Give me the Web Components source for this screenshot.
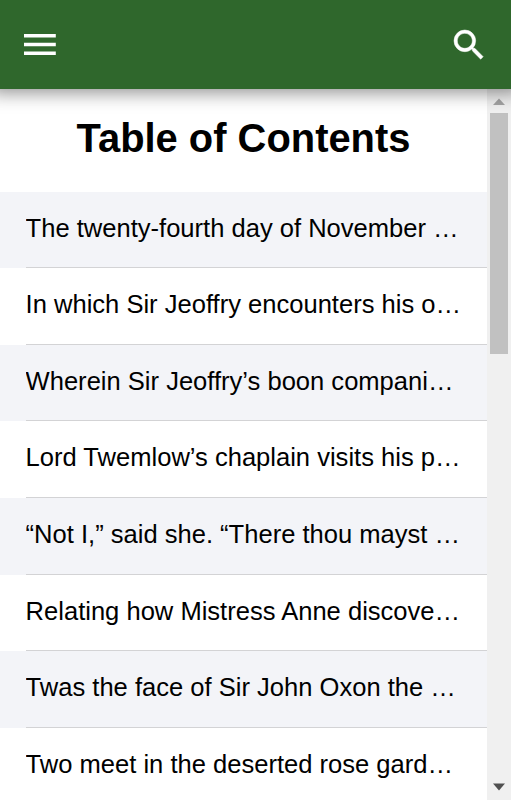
<!DOCTYPE html>
<html lang="en">
<head>
<meta charset="utf-8">
<meta name="viewport" content="width=device-width, initial-scale=1">
<title>Table of Contents</title>
<style>
    body {
        margin: 0;
        height: 100vh;
        overflow: hidden;
        background: #fff;
        color: #000;
        font-family: "Liberation Sans", Arial, sans-serif;
    }
</style>
</head>
<body>
<book-app>
    <app-toolbar slot="header"></app-toolbar>
    <toc-list heading="Table of Contents">
        <toc-item>The twenty-fourth day of November …</toc-item>
        <toc-item>In which Sir Jeoffry encounters his o…</toc-item>
        <toc-item>Wherein Sir Jeoffry’s boon compani…</toc-item>
        <toc-item>Lord Twemlow’s chaplain visits his p…</toc-item>
        <toc-item>“Not I,” said she. “There thou mayst …</toc-item>
        <toc-item>Relating how Mistress Anne discove…</toc-item>
        <toc-item>Twas the face of Sir John Oxon the …</toc-item>
        <toc-item>Two meet in the deserted rose gard…</toc-item>
    </toc-list>
    <scroll-track slot="scrollbar"></scroll-track>
</book-app>

<script>
class BookApp extends HTMLElement {
    constructor() {
        super();
        this.attachShadow({ mode: 'open' });
        this.shadowRoot.innerHTML = `
            <style>
                :host {
                    display: flex;
                    flex-direction: column;
                    height: 100vh;
                    overflow: hidden;
                }

                .body {
                    display: flex;
                    flex: 1;
                    min-height: 0;
                }

                main {
                    flex: 1;
                    min-width: 0;
                    overflow: hidden;
                }
            </style>
            <slot name="header"></slot>
            <div class="body">
                <main><slot></slot></main>
                <slot name="scrollbar"></slot>
            </div>
        `;
    }
}

class AppToolbar extends HTMLElement {
    constructor() {
        super();
        this.attachShadow({ mode: 'open' });
        this.shadowRoot.innerHTML = `
            <style>
                :host {
                    display: flex;
                    align-items: center;
                    justify-content: space-between;
                    box-sizing: border-box;
                    flex: none;
                    height: 89.4px;
                    padding: 0 21.8px 0 20.4px;
                    background: #2f672c;
                    color: #fff;
                    position: relative;
                    z-index: 1;
                    box-shadow: 0 -6px 17px 10px rgba(0, 0, 0, 0.43);
                }

                button {
                    display: flex;
                    padding: 0;
                    border: 0;
                    background: none;
                    color: inherit;
                    cursor: pointer;
                }

                svg {
                    display: block;
                    fill: currentColor;
                }
            </style>
            <button id="menu" aria-label="Menu">
                <svg width="39" height="39" viewBox="0 0 39 39">
                    <path d="M4 8.9h31.8v3.6h-31.8zM4 17.7h31.8v3.6h-31.8zM4 26.4h31.8v3.6h-31.8z"/>
                </svg>
            </button>
            <button id="search" aria-label="Search">
                <svg width="40" height="40" viewBox="0 0 24 24" stroke="currentColor" stroke-width="0.3">
                    <path d="M15.5 14h-.79l-.28-.27A6.471 6.471 0 0 0 16 9.5 6.5 6.5 0 1 0 9.5 16c1.61 0 3.09-.59 4.23-1.57l.27.28v.79l5 4.99L20.49 19l-4.99-5zm-6 0C7.01 14 5 11.99 5 9.5S7.01 5 9.5 5 14 7.01 14 9.5 11.99 14 9.5 14z"/>
                </svg>
            </button>
        `;
    }
}

class TocList extends HTMLElement {
    connectedCallback() {
        this.attachShadow({ mode: 'open' });
        this.shadowRoot.innerHTML = `
            <style>
                :host {
                    display: block;
                }

                h1 {
                    margin: 0;
                    height: 102.2px;
                    font-size: 39.9px;
                    line-height: 98px;
                    text-align: center;
                    white-space: nowrap;
                }

                ::slotted(toc-item:nth-child(odd)) {
                    background: #f3f4f8;
                }
            </style>
            <h1>${this.getAttribute('heading')}</h1>
            <slot></slot>
        `;
    }
}

class TocItem extends HTMLElement {
    constructor() {
        super();
        this.attachShadow({ mode: 'open' });
        this.shadowRoot.innerHTML = `
            <style>
                :host {
                    display: block;
                    padding-left: 25.6px;
                    font-size: 25.56px;
                }

                .label {
                    box-sizing: border-box;
                    height: 76.64px;
                    border-bottom: 1px solid #d3d3d5;
                    line-height: 73px;
                    white-space: nowrap;
                    overflow: hidden;
                }
            </style>
            <div class="label"><slot></slot></div>
        `;
    }
}

class ScrollTrack extends HTMLElement {
    constructor() {
        super();
        this.attachShadow({ mode: 'open' });
        this.shadowRoot.innerHTML = `
            <style>
                :host {
                    display: flex;
                    flex-direction: column;
                    align-items: center;
                    flex: none;
                    width: 24px;
                    background: #f0f0f0;
                }

                svg {
                    display: block;
                    flex: none;
                }

                .thumb {
                    width: 18px;
                    height: 241px;
                    background: #c1c1c1;
                }

                .gap {
                    flex: 1;
                }
            </style>
            <svg width="24" height="24" viewBox="0 0 24 24"><path d="M12 9.5l6 6.5H6z" fill="#a3a3a3"/></svg>
            <div class="thumb"></div>
            <div class="gap"></div>
            <svg width="24" height="24" viewBox="0 0 24 24"><path d="M12 14.5l6-7H6z" fill="#505050"/></svg>
        `;
    }
}

customElements.define('book-app', BookApp);
customElements.define('app-toolbar', AppToolbar);
customElements.define('toc-list', TocList);
customElements.define('toc-item', TocItem);
customElements.define('scroll-track', ScrollTrack);
</script>
</body>
</html>
